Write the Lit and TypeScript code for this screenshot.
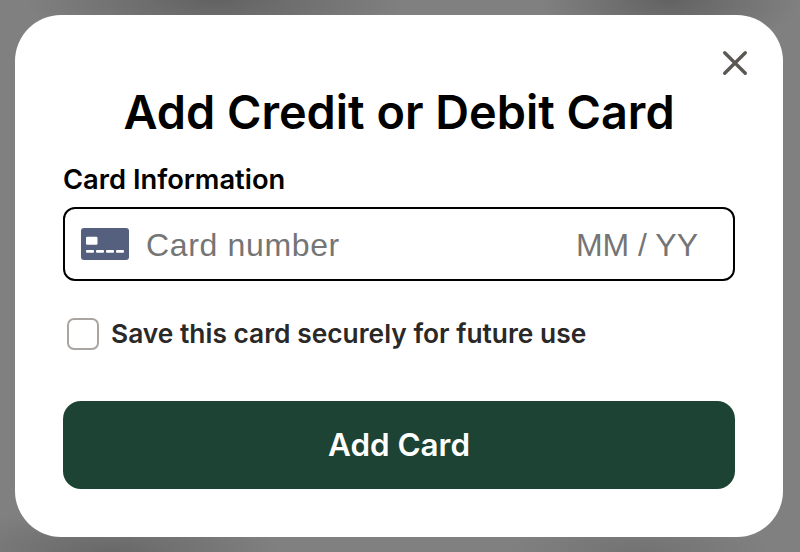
import { LitElement, html, css } from "lit";
import { customElement } from "lit/decorators.js";

@customElement("app-root")
export class AppRoot extends LitElement {
  static styles = css`
    :host {
      display: block;
      width: 800px;
      height: 552px;
      box-sizing: border-box;
      padding: 15px 17px 15px 15px;
      overflow: hidden;
      background:
        radial-gradient(ellipse 190px 50px at 215px 0, #626262, transparent),
        radial-gradient(ellipse 130px 50px at 670px 0, #626262, transparent),
        radial-gradient(ellipse 170px 45px at 110px 552px, #686868, transparent),
        radial-gradient(ellipse 130px 35px at 640px 552px, #727272, transparent),
        #808080;
      font-family: "Inter", "Liberation Sans", sans-serif;
    }
    .modal {
      position: relative;
      box-sizing: border-box;
      height: 522px;
      background: #fff;
      border-radius: 46px;
      padding: 69px 48px 48px;
      display: flex;
      flex-direction: column;
    }
    .close {
      position: absolute;
      top: 35px;
      right: 35px;
      width: 26px;
      height: 26px;
      display: block;
    }
    h1 {
      margin: 0;
      font-size: 46.8px;
      line-height: 56px;
      font-weight: 600;
      color: #000;
      text-align: center;
      white-space: nowrap;
    }
    label.title {
      margin-top: 23px;
      font-size: 27.3px;
      line-height: 34px;
      font-weight: 600;
      color: #000;
    }
    .field {
      margin-top: 10px;
      height: 74px;
      flex: none;
      box-sizing: border-box;
      border: 2px solid #000;
      border-radius: 12px;
      padding: 0 35px 0 16px;
      display: flex;
      align-items: center;
      font-family: "Liberation Sans", sans-serif;
      font-size: 32px;
      color: #757575;
    }
    .field svg {
      width: 48px;
      height: 32px;
      margin-right: 17px;
      flex: none;
    }
    .field span {
      padding-top: 2px;
    }
    .field .num {
      flex: 1;
      letter-spacing: 0.65px;
    }
    .save {
      margin-top: 37px;
      padding-left: 4px;
      display: flex;
      align-items: center;
      gap: 12px;
      height: 32px;
      font-size: 26.35px;
      font-weight: 600;
      color: #2b2828;
    }
    .save .text {
      padding-bottom: 2px;
    }
    .box {
      width: 32px;
      height: 32px;
      box-sizing: border-box;
      border: 2px solid #aaa5a0;
      border-radius: 7px;
      flex: none;
    }
    button {
      margin-top: 51px;
      height: 88px;
      flex: none;
      border: 0;
      border-radius: 18px;
      background: #1c4334;
      color: #fff;
      font: 600 31.4px "Inter", "Liberation Sans", sans-serif;
    }
  `;

  render() {
    return html`
      <div class="modal">
        <svg class="close" viewBox="0 0 26 26" fill="none" stroke="#5b5853" stroke-width="3.4" stroke-linecap="round">
          <path d="M2.7 2.7 L23.3 23.3 M23.3 2.7 L2.7 23.3" />
        </svg>
        <h1>Add Credit or Debit Card</h1>
        <label class="title">Card Information</label>
        <div class="field">
          <svg viewBox="0 0 48 32">
            <rect width="48" height="32" rx="3" fill="#55607f" />
            <rect x="5" y="8.7" width="11.5" height="8" rx="1.2" fill="#fff" />
            <rect x="5" y="22" width="8" height="2.7" rx="1" fill="#fff" />
            <rect x="15" y="22" width="8" height="2.7" rx="1" fill="#fff" />
            <rect x="25" y="22" width="8" height="2.7" rx="1" fill="#fff" />
            <rect x="35" y="22" width="8" height="2.7" rx="1" fill="#fff" />
          </svg>
          <span class="num">Card number</span>
          <span>MM / YY</span>
        </div>
        <div class="save">
          <span class="box"></span>
          <span class="text">Save this card securely for future use</span>
        </div>
        <button>Add Card</button>
      </div>
    `;
  }
}
